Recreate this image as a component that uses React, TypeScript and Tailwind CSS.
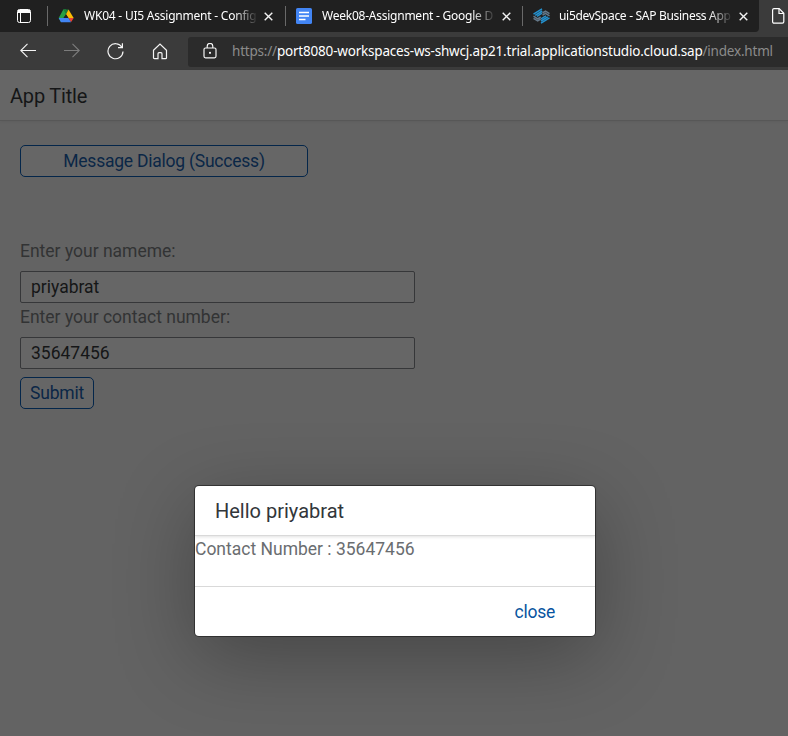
import React from "react";

const CloseIcon = () => (
  <svg width="9" height="9" viewBox="0 0 9 9" className="shrink-0" fill="none" stroke="#f2f2f2" strokeWidth="1.4">
    <path d="M.7.7l7.6 7.6M8.3.7L.7 8.3" />
  </svg>
);

const DriveIcon = () => (
  <svg width="16" height="16" viewBox="0 0 16 16" className="shrink-0">
    <path d="M5.3 1.5h2.7v4.7L5.4 10 3 14.3.7 10z" fill="#26a045" />
    <path d="M5.3 1.5h5.2L8 6.2z" fill="#188038" />
    <path d="M10.5 1.5L15.7 10H10.5L8 6.2z" fill="#fbbc04" />
    <path d="M10.5 10h5.2L13 14.3z" fill="#ea4335" />
    <path d="M.7 10h9.8l2.5 4.3H3z" fill="#4285f4" />
    <path d="M8 6.2L10.3 10H5.7z" fill="#202020" />
  </svg>
);

const DocsIcon = () => (
  <svg width="16" height="16" viewBox="0 0 16 16" className="shrink-0">
    <rect width="16" height="16" rx="1.6" fill="#4285f4" />
    <path d="M3 4.5h10M3 8h10M3 11.5h6.5" stroke="#fff" strokeWidth="1.5" />
  </svg>
);

const StudioIcon = () => (
  <svg width="17" height="16" viewBox="0 0 17 16" className="-mr-px shrink-0" fill="none" strokeWidth="1.5">
    <path d="M.5 6.2L9 .9M2.2 7.3L9.2 3M4 8.3l5-3.1" stroke="#2491cf" />
    <path d="M.5 8.2l4.2 2.6 3-1.8M.5 10.3l4.2 2.5 3-1.8" stroke="#65798a" />
    <path d="M9.5 5l3-1.8 4 2.5M9.5 7.2l3-1.9 4 2.5" stroke="#65798a" />
    <path d="M13 7.9l-5 3M14.8 8.8L8 13M16.5 9.9L8 15.2" stroke="#2491cf" />
  </svg>
);

type TabProps = { icon: React.ReactNode; title: string; width: string; text: string };

const Tab = ({ icon, title, width, text }: TabProps) => (
  <div className={`flex h-8 shrink-0 items-center ${width}`}>
    <span className="h-5 w-px shrink-0 bg-[#696969]" />
    <span className="ml-[10px] flex">{icon}</span>
    <span className="ml-[10px] w-[172px] shrink-0 overflow-hidden whitespace-nowrap [mask-image:linear-gradient(to_right,#000_150px,transparent_174px)]">
      <span className={`block text-[12px] leading-5 text-white ${text}`}>{title}</span>
    </span>
    <span className="ml-[8px] flex"><CloseIcon /></span>
  </div>
);

const Browser = () => (
  <header className="h-[70px] bg-[#3b3b3b] font-['Noto_Sans','Open_Sans',sans-serif]">
    <div className="flex h-8 overflow-hidden bg-[#3b3b3b]">
      <div className="flex h-8 w-[759px] shrink-0 items-center rounded-br-[4px] bg-[#202020]">
        <div className="w-[47px] shrink-0 pl-[17px]">
          <svg width="14" height="14" viewBox="0 0 14 14" fill="none" stroke="#fff">
            <rect x=".5" y=".5" width="13" height="13" rx="2" />
            <path d="M1 2.5h12" strokeWidth="3" />
            <path d="M3.5 4v9" />
          </svg>
        </div>
        <Tab icon={<DriveIcon />} title="WK04 - UI5 Assignment - Config" width="w-[238px]" text="tracking-[-0.22px]" />
        <Tab icon={<DocsIcon />} title="Week08-Assignment - Google D" width="w-[237px]" text="tracking-[-0.24px]" />
        <Tab icon={<StudioIcon />} title="ui5devSpace - SAP Business App" width="w-[237px]" text="tracking-[-0.3px]" />
      </div>
      <svg width="13" height="16" viewBox="0 0 13 16" className="ml-[13px] mt-2 shrink-0" fill="none" stroke="#fff" strokeWidth="1.2">
        <path d="M2 .7h5.2l4.6 4.6v8.5a1.4 1.4 0 01-1.4 1.4H2A1.4 1.4 0 01.6 13.8V2A1.4 1.4 0 012 .7z" />
        <path d="M7 .9v4.6h4.7" />
      </svg>
    </div>
    <div className="flex h-[38px] items-center">
      <nav className="flex w-[188px] shrink-0 items-center pl-5">
        <svg width="16" height="16" viewBox="0 0 16 16" fill="none" stroke="#f5f5f5" strokeWidth="1.1">
          <path d="M16 7.5H.8M7.5.8L.8 7.5l6.7 6.7" />
        </svg>
        <svg width="16" height="16" viewBox="0 0 16 16" className="ml-7" fill="none" stroke="#7c7c7c" strokeWidth="1.1">
          <path d="M0 7.5h15.2M8.5.8l6.7 6.7-6.7 6.7" />
        </svg>
        <svg width="17" height="17" viewBox="0 0 17 17" className="ml-[27px]" fill="none" stroke="#f5f5f5" strokeWidth="1.2">
          <path d="M14.9 4.3A7.5 7.5 0 1016 8.5M15.4 .3v4.3h-4.4" />
        </svg>
        <svg width="16" height="17" viewBox="0 0 16 17" className="ml-[28px]" fill="none" stroke="#f5f5f5" strokeWidth="1.2">
          <path d="M1.5 7.2L8 1l6.5 6.2v7.5q0 1-1 1H10v-5a1 1 0 00-1-1H7a1 1 0 00-1 1v5H2.5q-1 0-1-1z" />
        </svg>
      </nav>
      <div className="mt-px flex h-[30px] flex-1 items-center overflow-hidden rounded-l-[3px] bg-[#2b2b2b] pl-[15px]">
        <svg width="14" height="16" viewBox="0 0 14 16" className="-mt-[2px] shrink-0" fill="none" stroke="#f5f5f5" strokeWidth="1.2">
          <rect x="1" y="5" width="12" height="9.8" rx="1.5" />
          <path d="M4.2 5V3.2a2.8 2.8 0 015.6 0V5" />
          <circle cx="7" cy="9.8" r=".5" fill="#fff" />
        </svg>
        <span className="ml-[15px] whitespace-nowrap text-[13.5px] tracking-[-0.2px] text-[#8b8b8b]">
          https://<span className="text-white">port8080-workspaces-ws-shwcj.ap21.trial.applicationstudio.cloud.sap</span>/index.html
        </span>
      </div>
    </div>
  </header>
);

const Field = ({ label, value }: { label: string; value: string }) => (
  <div className="h-[66px] w-[395px]">
    <label className="flex h-7 items-center text-[17.5px] text-[#323334]">{label}</label>
    <div className="mt-[6px] flex h-8 items-center rounded-[2px] border border-[#363739] bg-[#666] pl-[10px] text-[17.5px] text-[#151617]">
      {value}
    </div>
  </div>
);

export default function App() {
  return (
    <div className="relative h-[736px] w-[788px] overflow-hidden bg-[#636363] font-['Roboto','Liberation_Sans',sans-serif]">
      <Browser />
      <main>
        <div className="flex h-[51px] items-center border-b border-[#575757] bg-[#666] pl-[10px] pt-[2px] text-[20px] tracking-[-0.2px] text-[#151617] shadow-[0_1px_3px_rgba(0,0,0,0.06)]">
          App Title
        </div>
        <div className="px-5 pt-6">
          <button className="flex h-8 w-72 items-center justify-center rounded-[5px] border border-[#04264a] bg-[#666] text-[17.5px] tracking-[-0.23px] text-[#0b2746]">
            Message Dialog (Success)
          </button>
          <div className="pt-[60px]">
            <Field label="Enter your nameme:" value="priyabrat" />
            <Field label="Enter your contact number:" value="35647456" />
          </div>
          <button className="mt-[8px] flex h-8 w-[74px] items-center justify-center rounded-[5px] border border-[#04264a] bg-[#666] text-[17.5px] tracking-[-0.2px] text-[#0b2746]">
            Submit
          </button>
        </div>
      </main>
      <section role="dialog" className="absolute left-[195px] top-[486px] h-[150px] w-[400px] rounded-[4px] bg-white shadow-[0_0_0_1px_rgba(0,0,0,0.42),0_20px_80px_rgba(0,0,0,0.3)]">
        <h2 className="flex h-[50px] items-center border-b border-[#d9d9d9] pl-5 pt-px text-[20px] text-[#32363a] shadow-[0_1px_3px_rgba(0,0,0,0.12)]">Hello priyabrat</h2>
        <p className="h-[50px] text-[17.5px] leading-[26px] text-[#6a6d70]">Contact Number : 35647456</p>
        <footer className="flex h-[50px] items-center justify-end border-t border-[#d9d9d9] pr-10 pt-[2px]">
          <button className="text-[17.5px] tracking-[-0.25px] text-[#0854a0]">close</button>
        </footer>
      </section>
    </div>
  );
}
